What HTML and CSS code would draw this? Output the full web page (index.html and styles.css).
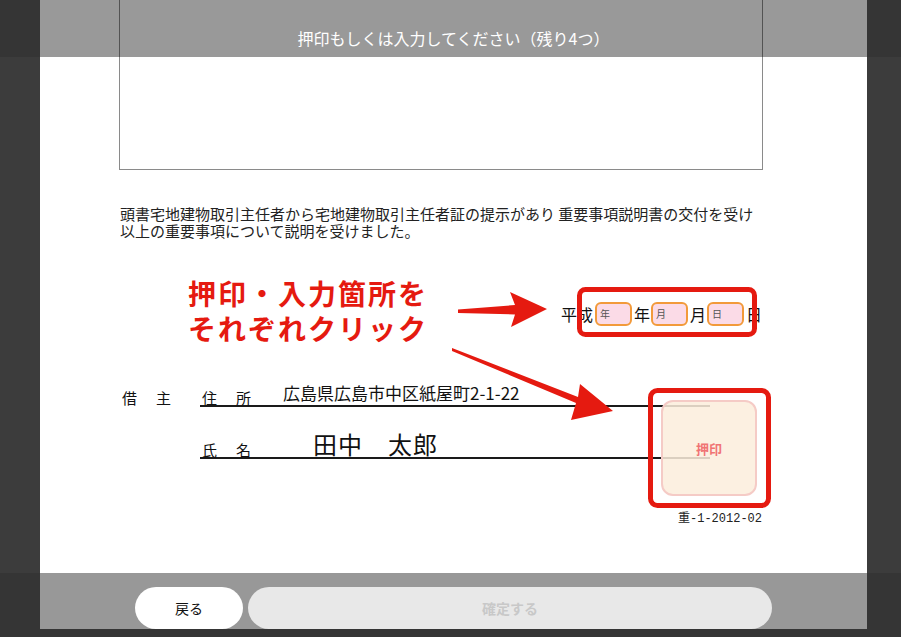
FILE: index.html
```html
<!DOCTYPE html>
<html lang="ja">
<head>
  <meta charset="UTF-8" />
  <meta name="viewport" content="width=device-width, initial-scale=1.0" />
  <title>押印・入力</title>
  <link rel="stylesheet" href="styles.css">
</head>
<body>
  <div class="sheet">
    <div class="frame"></div>

    <p class="notice">
      頭書宅地建物取引主任者から宅地建物取引主任者証の提示があり 重要事項説明書の交付を受け<br>
      以上の重要事項について説明を受けました。
    </p>

    <div class="date-row">
      <span class="era">平成</span>
      <span class="slot">年</span><span class="unit">年</span>
      <span class="slot">月</span><span class="unit">月</span>
      <span class="slot">日</span><span class="unit">日</span>
    </div>

    <div class="borrower">
      <div class="row">
        <span class="who">借　主</span>
        <div class="field">
          <span class="label">住　所</span>
          <span class="value address">広島県広島市中区紙屋町2-1-22</span>
        </div>
      </div>
      <div class="row second">
        <span class="who"></span>
        <div class="field">
          <span class="label">氏　名</span>
          <span class="value name">田中　太郎</span>
        </div>
      </div>
      <div class="seal">押印</div>
    </div>

    <div class="doc-code">重-1-2012-02</div>
  </div>

  <div class="footer">
    <div class="footer-bar">
      <button class="btn back">戻る</button>
      <button class="btn confirm" disabled>確定する</button>
    </div>
  </div>

  <!-- translucent title strip over the document -->
  <div class="topbar">
    <div class="side left"></div>
    <div class="title">押印もしくは入力してください（残り4つ）</div>
    <div class="side"></div>
  </div>

  <div class="callout">押印・入力箇所を<br>それぞれクリック</div>

  <svg class="marks" width="901" height="637" viewBox="0 0 901 637">
    <rect x="579.5" y="289.5" width="175" height="45" rx="6" fill="none" stroke="#e51a10" stroke-width="5"/>
    <rect x="650.5" y="390.5" width="118" height="115" rx="7" fill="none" stroke="#e51a10" stroke-width="5"/>
    <polygon points="458,309.5 515,305 510,292 547,309 511,327 515,314.5 458,313" fill="#e51a10"/>
    <polygon points="452,348 578,397 580,384 613,411 571,420 576,403 452,351" fill="#e51a10"/>
  </svg>
</body>
</html>
```

FILE: styles.css
```css
body {
  margin: 0;
  height: 637px;
  overflow: hidden;
  position: relative;
  background: #3c3c3c;
  font-family: "Noto Sans CJK JP", "Noto Sans", sans-serif;
  color: #111;
}

.sheet {
  width: 827px;
  height: 573px;
  margin-left: 40px;
  background: #ffffff;
  overflow: hidden;
}

.frame {
  margin-left: 79px;
  width: 642px;
  height: 169px;
  border: 1px solid #8a8a8a;
  border-top: none;
}

.notice {
  margin: 35px 0 0 80px;
  font-size: 15px;
  line-height: 17px;
  color: #222;
}

/* date line */
.date-row {
  display: flex;
  align-items: center;
  height: 24px;
  margin: 63px 0 0 521px;
  font-size: 16px;
}

.era {
  margin-right: 2px;
}

.slot {
  box-sizing: border-box;
  width: 37px;
  height: 24px;
  padding-left: 3px;
  border: 2px solid #f29a3a;
  border-radius: 6px;
  background: #fbdbe7;
  font-size: 10px;
  line-height: 20px;
  color: #555;
}

.unit {
  margin: 0 1px 0 2px;
}

/* borrower signature block */
.borrower {
  position: relative;
  margin-top: 55px;
}

.row {
  display: flex;
  align-items: flex-end;
}

.row.second {
  margin-top: 24px;
}

.who {
  margin-left: 82px;
  width: 78px;
  font-size: 15px;
  line-height: 18px;
  letter-spacing: 2px;
}

.field {
  display: flex;
  align-items: flex-end;
  width: 510px;
  border-bottom: 2px solid #1a1a1a;
}

.label {
  width: 81px;
  padding-left: 2px;
  font-size: 15px;
  line-height: 14px;
  letter-spacing: 2px;
}

.address {
  font-size: 17px;
  line-height: 24px;
}

.name {
  margin-left: 30px;
  font-size: 24px;
  line-height: 26px;
  letter-spacing: 1px;
}

.seal {
  position: absolute;
  left: 621px;
  top: 19px;
  box-sizing: border-box;
  width: 96px;
  height: 96px;
  border: 2px solid #f5cbc6;
  border-radius: 12px;
  background: rgba(252, 238, 220, 0.86);
  display: flex;
  align-items: center;
  justify-content: center;
  font-size: 13px;
  font-weight: bold;
  color: #f07474;
}

.doc-code {
  margin: 52px 0 0 638px;
  font-family: "Liberation Mono", "Noto Sans CJK JP", monospace;
  font-size: 12px;
  line-height: 16px;
  color: #222;
}

/* bottom action bar */
.footer {
  height: 64px;
  background: #353535;
}

.footer-bar {
  box-sizing: border-box;
  width: 827px;
  height: 56px;
  margin-left: 40px;
  padding-top: 14px;
  background: #989898;
  overflow: hidden;
  display: flex;
  justify-content: center;
  gap: 5px;
}

.btn {
  height: 42px;
  border: none;
  border-radius: 21px;
  font-family: inherit;
  font-size: 14px;
}

.back {
  width: 108px;
  background: #ffffff;
  color: #111;
}

.confirm {
  width: 524px;
  background: #e8e8e8;
  color: #c8c8c8;
  font-weight: bold;
}

.topbar {
  position: absolute;
  top: 0;
  left: 0;
  width: 100%;
  height: 57px;
  display: flex;
}

.topbar .side {
  flex: 1;
  background: #353535;
}

.topbar .side.left {
  flex: 0 0 40px;
}

.topbar .title {
  width: 827px;
  box-sizing: border-box;
  padding-top: 28px;
  background: rgba(0, 0, 0, 0.4);
  color: #ffffff;
  font-size: 16px;
  line-height: 20px;
  text-align: center;
}

.callout {
  position: absolute;
  left: 188px;
  top: 276px;
  font-size: 28px;
  font-weight: bold;
  line-height: 35px;
  letter-spacing: 2px;
  color: #e51a10;
}

.marks {
  position: absolute;
  left: 0;
  top: 0;
  pointer-events: none;
}
```
